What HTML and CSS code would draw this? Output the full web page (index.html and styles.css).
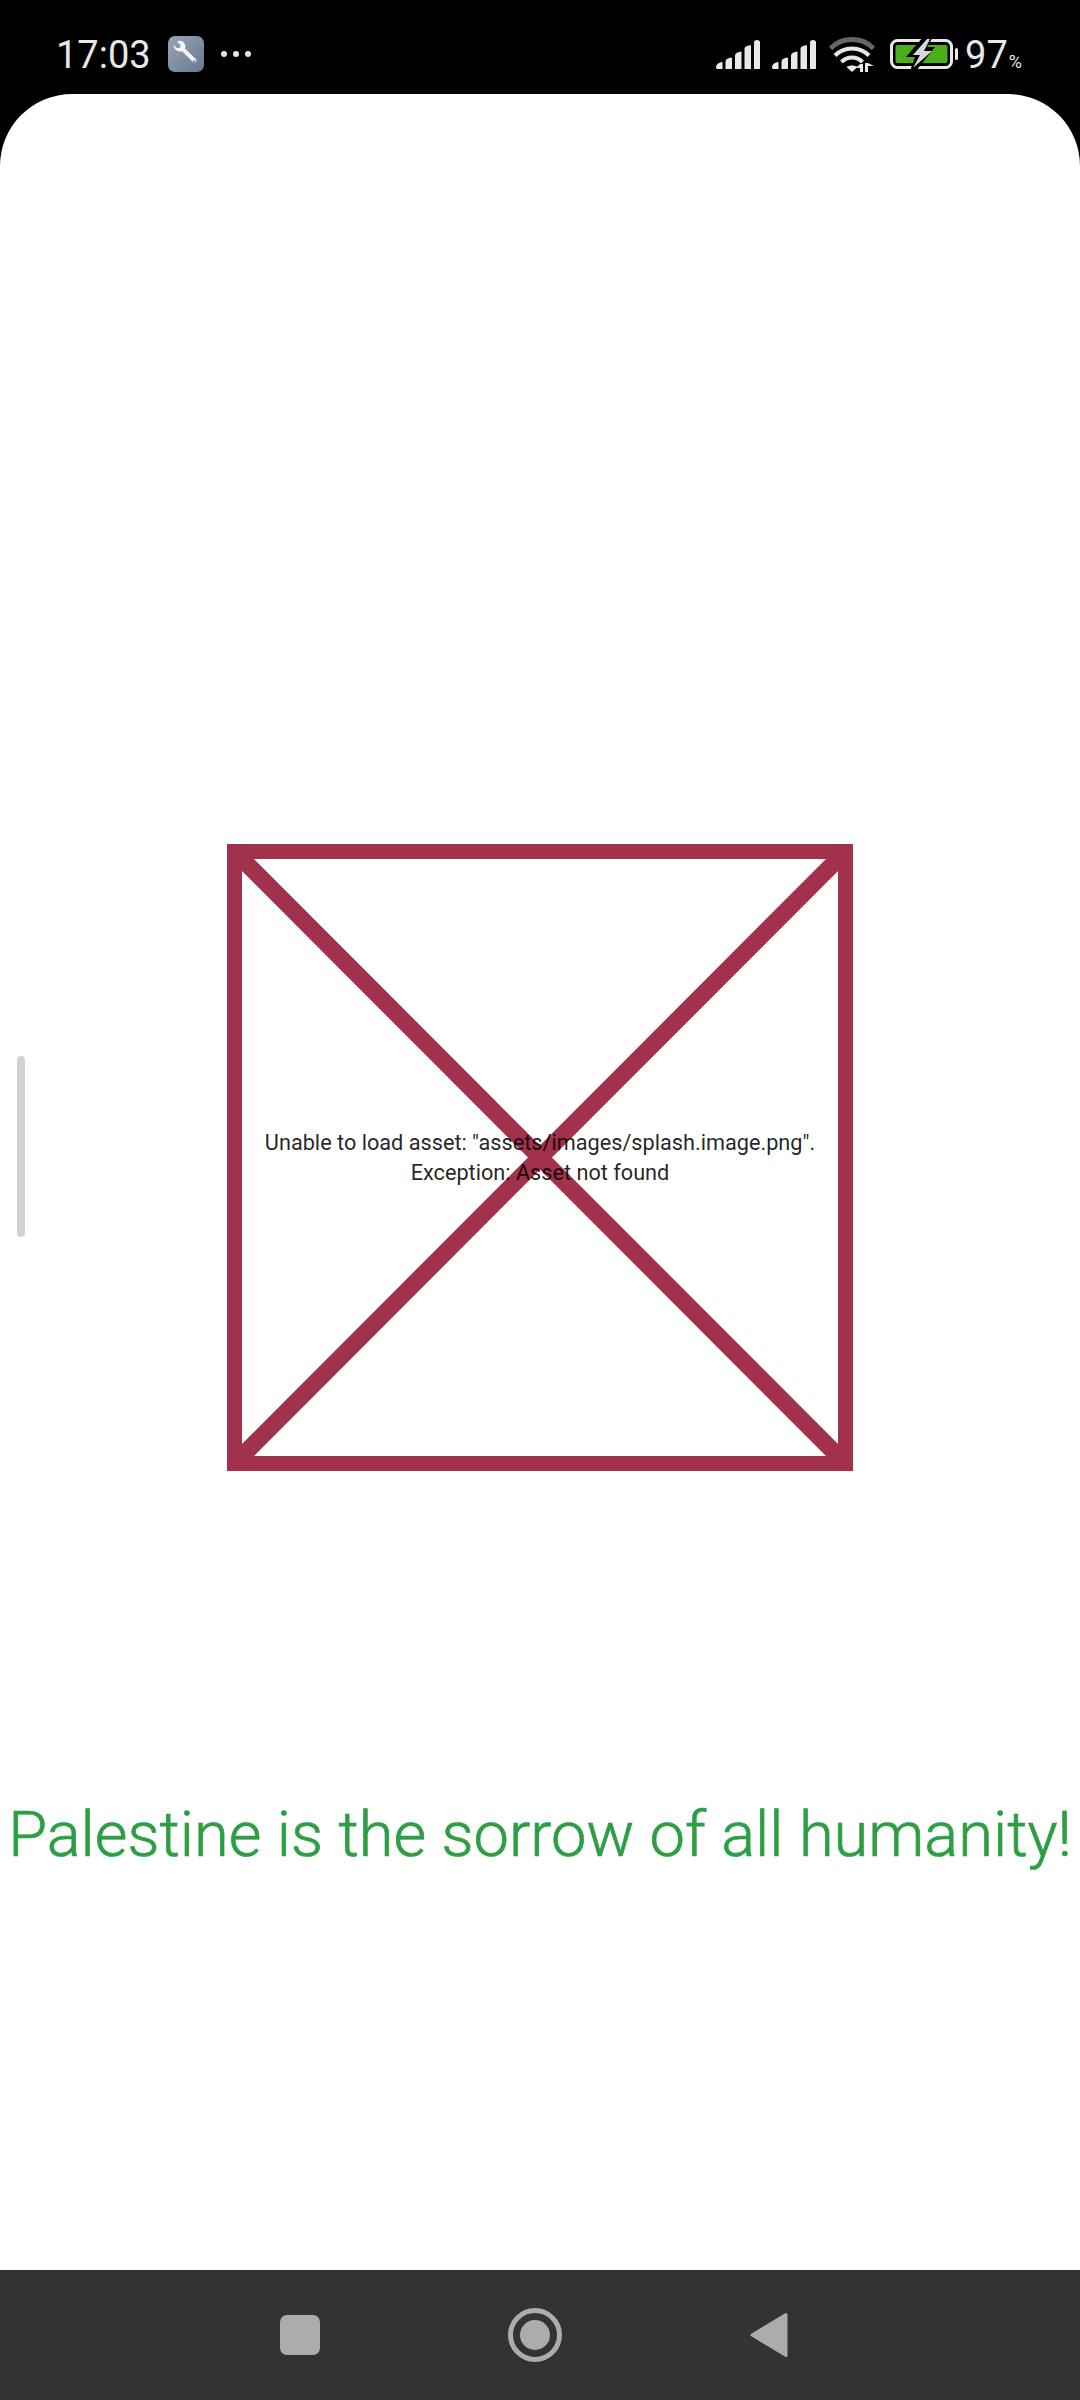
FILE: index.html
```html
<!DOCTYPE html>
<html lang="en">
<head>
<meta charset="utf-8">
<title>Splash</title>
<link rel="stylesheet" href="styles.css">
</head>
<body>
<div class="screen">
  <header class="status">
    <div class="status-left">
      <span class="time">17:03</span>
      <svg class="tool-tile" viewBox="0 0 36 36" aria-hidden="true">
        <defs><linearGradient id="tile" x1="0" y1="0" x2="1" y2="1"><stop offset="0" stop-color="#97a5b6"/><stop offset="1" stop-color="#69798e"/></linearGradient></defs>
        <rect width="36" height="36" rx="7" fill="url(#tile)"/>
        <path d="M5.500 9l3.700 3.300 2.700-.6.700-2.700L8.800 5.400c3-1.200 6-.5 7.600 1.800 1.200 1.700 1.300 3.700.5 5.300l10.700 10.300c1 1 1.100 2.300.2 3.200s-2.300.8-3.200-.2L14.100 15.200c-1.800.7-3.900.4-5.800-.9C6.300 12.800 5.200 10.900 5.500 9z" fill="#f2f4f6"/>
        <circle cx="26.200" cy="25.200" r="1.200" fill="#7b8a9d"/>
      </svg>
      <span class="dots"><i></i><i></i><i></i></span>
    </div>
    <div class="status-right">
      <svg class="signal" viewBox="0 0 44 29" aria-hidden="true">
        <path d="M0 27.500c0-2 1-3.500 3-4.500l2-.8c1-.3 1.500.2 1.500 1V29H1.500A1.500 1.500 0 0 1 0 27.500zM9.500 22c0-1.500.7-2.800 2-3.300l2.500-1c1.300-.5 2 0 2 1V29H9.500zM19 16c0-1.500.7-2.800 2-3.300l3-1c1-.3 1.500.2 1.500 1V29H19zM28.500 9.500c0-1.500.7-2.700 2-3.200l3-1c1.200-.4 1.500.2 1.500 1V29h-6.500zM38 2.500C38 1 39 0 41 0s3 1 3 2.500V29h-6z" fill="#e8e8e8"/>
      </svg>
      <svg class="signal" viewBox="0 0 44 29" aria-hidden="true">
        <path d="M0 27.500c0-2 1-3.500 3-4.500l2-.8c1-.3 1.500.2 1.500 1V29H1.500A1.500 1.500 0 0 1 0 27.500zM9.500 22c0-1.500.7-2.800 2-3.300l2.500-1c1.300-.5 2 0 2 1V29H9.500zM19 16c0-1.500.7-2.800 2-3.300l3-1c1-.3 1.500.2 1.500 1V29H19zM28.500 9.500c0-1.500.7-2.700 2-3.200l3-1c1.200-.4 1.500.2 1.500 1V29h-6.500zM38 2.500C38 1 39 0 41 0s3 1 3 2.500V29h-6z" fill="#e8e8e8"/>
      </svg>
      <svg class="wifi" viewBox="0 0 46 35" aria-hidden="true">
        <path d="M1.500 11.500C13-.5 33-.5 44.500 11.500" fill="none" stroke="#666" stroke-width="5"/>
        <path d="M6 18.500C15 9 31 9 40 18.500" fill="none" stroke="#e8e8e8" stroke-width="4"/>
        <path d="M12.500 25c6-6 15-6 21 0" fill="none" stroke="#e8e8e8" stroke-width="4"/>
        <path d="M17.500 30c3-2 8-2 11 0l-5.500 5z" fill="#e8e8e8"/>
        <path d="M31 35v-8h3v8zM36 35V26h3v9zM27 31l4-4v4zM39 29h6l-6-3z" fill="#e8e8e8"/>
      </svg>
      <svg class="battery" viewBox="0 0 68 30" aria-hidden="true">
        <rect x="1.500" y="1.500" width="60" height="27" rx="6" fill="none" stroke="#e8e8e8" stroke-width="3"/>
        <rect x="5.500" y="6" width="52" height="18" rx="2" fill="#4caf1a"/>
        <rect x="65" y="9" width="3" height="12" rx="1.500" fill="#e8e8e8"/>
        <path d="M33-2H43L37 8h8L26 32H20L25 18H16z" fill="#000"/>
        <path d="M37 0L23 16h7l-7 13 19-17h-8l6-12z" fill="#d8d8d8"/>
      </svg>
      <span class="battery-level">97<small>%</small></span>
    </div>
  </header>

  <main class="content">
    <div class="missing-asset">
      <svg class="missing-cross" viewBox="0 0 626 626" preserveAspectRatio="none" aria-hidden="true">
        <path d="M8 8L618 618M618 8L8 618" fill="none" stroke="#a2314b" stroke-width="17"/>
      </svg>
      <p class="missing-text">Unable to load asset: "assets/images/splash.image.png".<br>Exception: Asset not found</p>
    </div>
    <p class="slogan">Palestine is the sorrow of all humanity!</p>
    <span class="edge-handle"></span>
  </main>

  <nav class="navbar">
    <span class="nav-square"></span>
    <span class="nav-home"><i></i></span>
    <svg class="nav-back" viewBox="0 0 38 46" aria-hidden="true">
      <path d="M36 2.500L2 23l34 20.500z" fill="#acacac" stroke="#acacac" stroke-width="3" stroke-linejoin="round"/>
    </svg>
  </nav>
</div>
</body>
</html>
```

FILE: styles.css
```css
* { box-sizing: border-box; }
html, body { margin: 0; padding: 0; background: #000; }
.screen { width: 1080px; height: 2400px; display: flex; flex-direction: column; background: #000; font-family: Roboto, "Liberation Sans", sans-serif; }

.status { height: 94px; flex: none; display: flex; justify-content: space-between; padding: 36px 0 0 56px; color: #e8e8e8; }
.status-left { display: flex; align-items: flex-start; }
.time { font-size: 38px; line-height: 38px; }
.tool-tile { width: 36px; height: 36px; margin-left: 17px; }
.dots { display: flex; gap: 6px; margin: 15px 0 0 17px; }
.dots i { width: 6px; height: 6px; border-radius: 50%; background: #e8e8e8; }
.status-right { display: flex; align-items: flex-start; padding-right: 58px; }
.signal { width: 44px; height: 29px; margin: 4px 12px 0 0; overflow: visible; }
.wifi { width: 46px; height: 35px; margin: 1px 15px 0 1px; }
.battery { width: 68px; height: 30px; margin: 3px 7px 0 0; overflow: visible; }
.battery-level { font-size: 38px; line-height: 38px; }
.battery-level small { font-size: 18px; margin-left: 1px; }

.content { flex: 1; position: relative; background: #fff; border-radius: 72px 72px 0 0; padding-top: 750px; display: flex; flex-direction: column; align-items: center; }
.missing-asset { width: 626px; height: 627px; border: 15px solid #a2314b; position: relative; display: flex; align-items: center; justify-content: center; }
.missing-cross { position: absolute; inset: -15px; width: 626px; height: 627px; }
.missing-text { position: relative; margin: 0; font-size: 21.7px; line-height: 29.500px; text-align: center; color: rgba(0, 0, 0, 0.87); white-space: nowrap; }
.slogan { margin: 326px 0 0; font-size: 63.2px; line-height: 74px; font-weight: 300; -webkit-text-stroke: 0.7px #2e9e44; color: #2e9e44; white-space: nowrap; }
.edge-handle { position: absolute; left: 17px; top: 962px; width: 8px; height: 181px; border-radius: 4px; background: #d2d2d2; }

.navbar { height: 130px; flex: none; background: #333; position: relative; display: flex; align-items: center; }
.nav-square { width: 40px; height: 40px; border-radius: 7px; background: #acacac; margin-left: 280px; }
.nav-home { width: 54px; height: 54px; border-radius: 50%; border: 5px solid #acacac; margin-left: 188px; display: flex; align-items: center; justify-content: center; }
.nav-home i { width: 30px; height: 30px; border-radius: 50%; background: #acacac; }
.nav-back { width: 38px; height: 46px; margin-left: 188px; }
```
